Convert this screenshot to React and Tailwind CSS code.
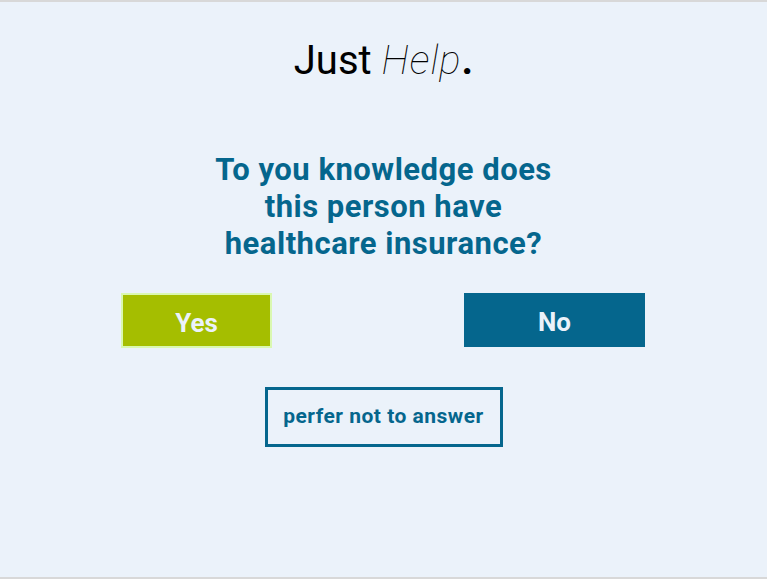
export default function App() {
  return (
    <div
      className="h-[579px] w-full border-t-2 border-b-2 border-[#d8d8d8] bg-[#EBF2FA] flex flex-col items-center"
      style={{ fontFamily: "Roboto, 'Noto Sans', sans-serif" }}
    >
      <div className="mt-[35px] text-[40px] leading-[48px] text-black">
        <span className="font-normal">Just</span>{" "}
        <span className="font-thin italic tracking-[1px]">Help</span>
        <span className="font-bold">.</span>
      </div>
      <h1 className="mt-[66px] text-center text-[31px] font-bold leading-[37px] tracking-[0.5px] text-[#05668D]">
        To you knowledge does
        <br />
        this person have
        <br />
        healthcare insurance?
      </h1>
      <div className="mt-[31px] flex w-full justify-between px-[121px]">
        <button className="flex h-[55px] w-[151px] items-center justify-center border-2 border-[#DAF8B0] bg-[#A5BE00] pt-[5px] text-[26px] font-bold text-[#EBF2FA]">
          Yes
        </button>
        <button className="mr-px flex h-[54px] w-[181px] items-center justify-center bg-[#05668D] pt-[4px] text-[26px] font-bold text-[#EBF2FA]">
          No
        </button>
      </div>
      <button className="mt-[39px] flex h-[60px] w-[238px] items-center justify-center border-[3px] border-[#05668D] text-[21px] font-bold tracking-[0.5px] text-[#05668D]">
        perfer not to answer
      </button>
    </div>
  );
}
